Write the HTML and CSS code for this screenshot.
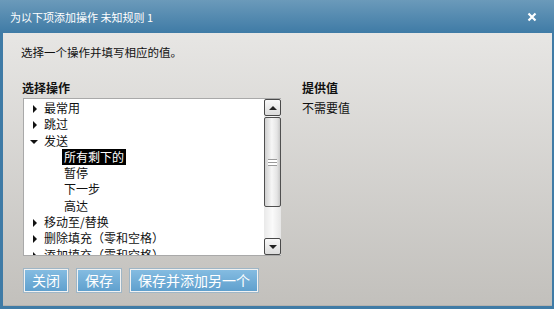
FILE: index.html
```html
<!DOCTYPE html>
<html lang="zh-CN">
<head>
    <meta charset="UTF-8">
    <title>为以下项添加操作</title>
    <link rel="stylesheet" href="styles.css">
</head>
<body>
    <div class="dialog">
        <!-- Title bar -->
        <div class="titlebar">
            <span class="title">为以下项添加操作 未知规则 1</span>
            <svg class="close" width="10" height="10" viewBox="0 0 10 10">
                <path d="M1.5 1.5 L8.5 8.5 M8.5 1.5 L1.5 8.5" stroke="#fff" stroke-width="2.2" fill="none"/>
            </svg>
        </div>

        <!-- Body -->
        <div class="panel">
            <p class="intro">选择一个操作并填写相应的值。</p>

            <div class="columns">
                <div class="col-actions">
                    <div class="label">选择操作</div>
                    <div class="listbox">
                        <ul class="tree">
                            <li class="node closed">最常用</li>
                            <li class="node closed">跳过</li>
                            <li class="node open">发送</li>
                            <li class="leaf"><span class="selected">所有剩下的</span></li>
                            <li class="leaf">暂停</li>
                            <li class="leaf">下一步</li>
                            <li class="leaf">高达</li>
                            <li class="node closed">移动至/替换</li>
                            <li class="node closed">删除填充（零和空格）</li>
                            <li class="node closed">添加填充（零和空格）</li>
                        </ul>
                        <div class="scrollbar">
                            <div class="sb-btn"><span class="arrow-up"></span></div>
                            <div class="sb-track">
                                <div class="sb-thumb"><span class="grip"></span></div>
                            </div>
                            <div class="sb-btn"><span class="arrow-down"></span></div>
                        </div>
                    </div>
                </div>

                <div class="col-value">
                    <div class="label">提供值</div>
                    <div class="value">不需要值</div>
                </div>
            </div>

            <div class="buttons">
                <button class="btn btn-close">关闭</button>
                <button class="btn btn-save">保存</button>
                <button class="btn btn-more">保存并添加另一个</button>
            </div>
        </div>
    </div>
</body>
</html>
```

FILE: styles.css
```css
/* Page */
body {
    margin: 0;
    font-family: "Noto Sans CJK SC", "Noto Sans", sans-serif;
    color: #111;
}

/* Dialog frame */
.dialog {
    width: 554px;
    height: 309px;
    display: flex;
    flex-direction: column;
    background: #3f7ba6;
}

.titlebar {
    height: 33px;
    flex: none;
    display: flex;
    align-items: center;
    justify-content: space-between;
    padding: 0 17px 0 10px;
    background: linear-gradient(#6b9aba, #3f7ba6);
}

.title {
    color: #fff;
    font-size: 11px;
    line-height: 14px;
    margin-top: 1px;
}

.close {
    display: block;
}

/* Gray content panel */
.panel {
    flex: 1;
    margin: 0 2px 3px 3px;
    padding: 0 20px;
    display: flex;
    flex-direction: column;
    background: linear-gradient(#e7e6e4, #c2c0bc);
    border-bottom: 1px solid #b4b2ae;
}

.intro {
    margin: 11px 0 0 -2px;
    font-size: 11.5px;
    line-height: 16px;
}

.columns {
    display: flex;
    gap: 21px;
    margin-top: 20px;
}

.label {
    font-size: 12px;
    font-weight: bold;
    line-height: 16px;
    height: 18px;
    margin-left: -1px;
}

.col-value .label {
    margin-left: 0;
}

.value {
    font-size: 12px;
    line-height: 16px;
    margin-top: 2px;
}

/* List box */
.listbox {
    width: 258px;
    height: 158px;
    box-sizing: border-box;
    display: flex;
    background: #fff;
    border: 1px solid #a9a9a9;
    border-right: none;
    overflow: hidden;
}

.tree {
    flex: 1;
    list-style: none;
    margin: 0;
    padding: 1px 0 0;
    font-size: 12px;
    line-height: 16.3px;
}

.tree li {
    white-space: nowrap;
    position: relative;
}

.node {
    padding-left: 20px;
}

.leaf {
    padding-left: 40px;
}

.node.closed::before {
    content: "";
    position: absolute;
    left: 9px;
    top: 5px;
    border-left: 4px solid #111;
    border-top: 4px solid transparent;
    border-bottom: 4px solid transparent;
}

.node.open::before {
    content: "";
    position: absolute;
    left: 6px;
    top: 7px;
    border-top: 4px solid #111;
    border-left: 4px solid transparent;
    border-right: 4px solid transparent;
}

.selected {
    display: inline-block;
    background: #000;
    color: #fff;
    padding: 0 2px;
    margin-left: -2px;
}

/* Scrollbar */
.scrollbar {
    width: 17px;
    flex: none;
    display: flex;
    flex-direction: column;
    background: linear-gradient(90deg, #e9e9e9, #fafafa 50%, #e6e6e6);
}

.sb-btn {
    height: 17px;
    box-sizing: border-box;
    border: 1px solid #4a4a4a;
    border-radius: 2px;
    background: linear-gradient(#f8f8f8, #dcdcdc);
    display: flex;
    align-items: center;
    justify-content: center;
}

.arrow-up {
    border-bottom: 4px solid #222;
    border-left: 4px solid transparent;
    border-right: 4px solid transparent;
}

.arrow-down {
    border-top: 4px solid #222;
    border-left: 4px solid transparent;
    border-right: 4px solid transparent;
}

.sb-track {
    flex: 1;
    padding-top: 1px;
}

.sb-thumb {
    height: 90px;
    box-sizing: border-box;
    border: 1px solid #505050;
    border-radius: 2px;
    background: linear-gradient(90deg, #d0d0d0, #f6f6f6 45%, #e4e4e4 80%, #c8c8c8);
    display: flex;
    align-items: center;
    justify-content: center;
}

.grip {
    width: 9px;
    height: 5px;
    border-top: 1px solid #9a9a9a;
    border-bottom: 1px solid #9a9a9a;
    background: linear-gradient(#fff 40%, #9a9a9a 40%, #9a9a9a 60%, #fff 60%);
}

/* Buttons */
.buttons {
    display: flex;
    gap: 7px;
    margin-top: 12px;
}

.btn {
    height: 25px;
    padding: 0 8px;
    font-family: "Noto Sans CJK SC", "Noto Sans", sans-serif;
    font-size: 14px;
    line-height: 19px;
    color: #fff;
    background: linear-gradient(#86bde2, #5e9fcd);
    border: 1px solid #9fb6c6;
    box-shadow: inset 0 0 0 1px #f2f2f2;
    border-radius: 0;
}

.btn-close,
.btn-save {
    width: 46px;
    padding: 0;
}

.btn-more {
    width: 130px;
    padding: 0;
}
```
